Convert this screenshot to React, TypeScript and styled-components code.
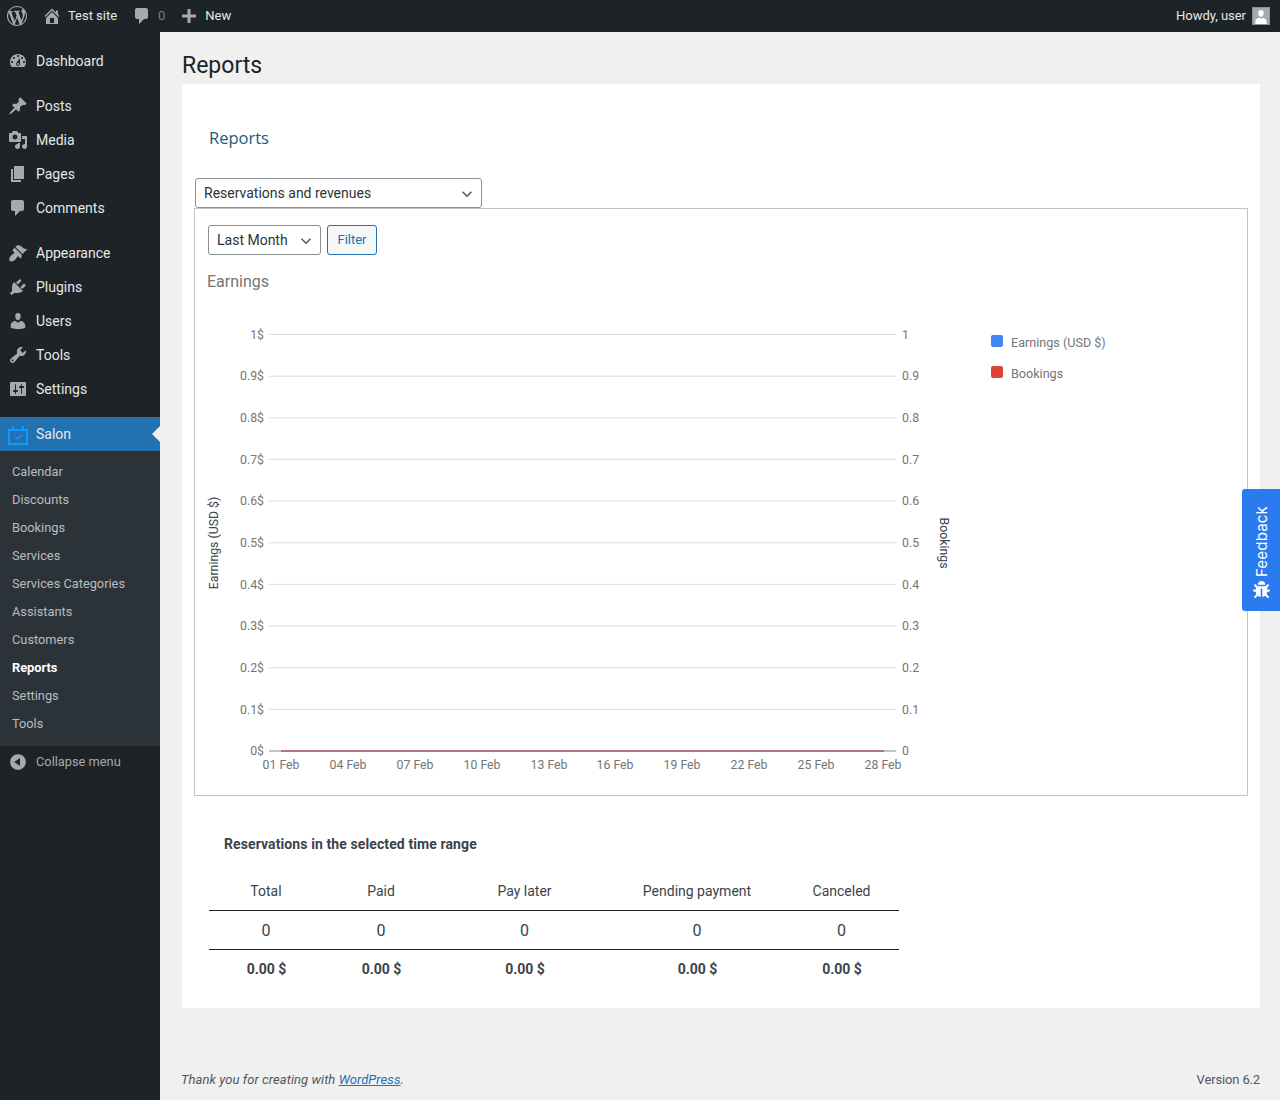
import React from "react";
import styled, { createGlobalStyle } from "styled-components";
import { FaBug } from "react-icons/fa";

const Global = createGlobalStyle`
  html, body { margin: 0; padding: 0; background: #f0f0f1; }
  body { font-family: Roboto, "Liberation Sans", sans-serif; font-size: 14px; font-weight: 400; color: #3c434a; }
  * { box-sizing: border-box; }
`;

const P = {
  wp: "M20 10c0-5.51-4.49-10-10-10C4.48 0 0 4.49 0 10c0 5.52 4.48 10 10 10 5.51 0 10-4.48 10-10zM7.78 15.37L4.37 6.22c.55-.02 1.17-.08 1.17-.08.5-.06.44-1.13-.06-1.11 0 0-1.45.11-2.37.11-.18 0-.37 0-.58-.01C4.12 2.69 6.87 1.11 10 1.11c2.33 0 4.45.87 6.05 2.34-.68-.11-1.65.39-1.65 1.58 0 .74.45 1.36.9 2.1.35.61.55 1.36.55 2.46 0 1.49-1.4 5-1.4 5l-3.03-8.37c.54-.02.82-.17.82-.17.5-.05.44-1.25-.06-1.22 0 0-1.44.12-2.38.12-.87 0-2.33-.12-2.33-.12-.5-.03-.56 1.2-.06 1.22l.92.08 1.26 3.41zM17.41 10c.24-.64.74-1.87.43-4.25.7 1.29 1.05 2.71 1.05 4.25 0 3.29-1.73 6.24-4.4 7.78.97-2.59 1.94-5.2 2.92-7.78zM6.1 18.09C3.12 16.65 1.11 13.53 1.11 10c0-1.3.23-2.48.72-3.59C3.25 10.3 4.67 14.2 6.1 18.09zm4.03-6.63l2.58 6.98c-.86.29-1.76.45-2.71.45-.79 0-1.57-.11-2.29-.33.81-2.38 1.62-4.74 2.42-7.1z",
  home: "M16 8.5l1.53 1.53-1.06 1.06L10 4.62l-6.47 6.47-1.06-1.06L10 2.5l4 4v-2h2v4zm-6-2.46l6 5.99V18H4v-5.97zM12 17v-5H8v5h4z",
  comment: "M5 2h9c1.1 0 2 .9 2 2v7c0 1.1-.9 2-2 2h-2l-5 5v-5H5c-1.1 0-2-.9-2-2V4c0-1.1.9-2 2-2z",
  plus: "M17 8.5v3h-5.5V17h-3v-5.5H3v-3h5.5V3h3v5.5z",
  dashboard: "M3.76 16h12.48c1.1-1.37 1.76-3.11 1.76-5 0-4.42-3.58-8-8-8s-8 3.58-8 8c0 1.89.66 3.63 1.76 5zM10 4c.55 0 1 .45 1 1s-.45 1-1 1-1-.45-1-1 .45-1 1-1zM6 6c.55 0 1 .45 1 1s-.45 1-1 1-1-.45-1-1 .45-1 1-1zm8 0c.55 0 1 .45 1 1s-.45 1-1 1-1-.45-1-1 .45-1 1-1zm-5.37 5.55L12 7v6c0 1.1-.9 2-2 2s-2-.9-2-2c0-.57.24-1.08.63-1.45zM4 10c.55 0 1 .45 1 1s-.45 1-1 1-1-.45-1-1 .45-1 1-1zm12 0c.55 0 1 .45 1 1s-.45 1-1 1-1-.45-1-1 .45-1 1-1zm-5 3c0-.55-.45-1-1-1s-1 .45-1 1 .45 1 1 1 1-.45 1-1z",
  post: "M10.44 3.02l1.82-1.82 6.36 6.35-1.83 1.82c-1.05-.68-2.48-.57-3.41.36l-.75.75c-.92.93-1.04 2.35-.35 3.41l-1.83 1.82-2.41-2.41-2.8 2.79c-.42.42-3.38 2.71-3.8 2.29s1.86-3.39 2.28-3.81l2.79-2.79L4.1 9.36l1.83-1.82c1.05.69 2.48.57 3.4-.36l.75-.75c.93-.92 1.05-2.35.36-3.41z",
  media: "M13 11V4c0-.55-.45-1-1-1h-1.67L9 1H5L3.67 3H2c-.55 0-1 .45-1 1v7c0 .55.45 1 1 1h10c.55 0 1-.45 1-1zM7 4.5c1.38 0 2.5 1.12 2.5 2.5S8.38 9.5 7 9.5 4.5 8.38 4.5 7 5.62 4.5 7 4.5zM14 6h5v10.5c0 1.38-1.12 2.5-2.5 2.5S14 17.88 14 16.5s1.12-2.5 2.5-2.5c.17 0 .34.02.5.05V9h-3V6zm-4 8.05V13h2v3.5c0 1.38-1.12 2.5-2.5 2.5S7 17.88 7 16.5 8.12 14 9.5 14c.17 0 .34.02.5.05z",
  page: "M6 15V2h10v13H6zm-1 1h8v2H3V5h2v11z",
  appearance: "M14.48 11.06L7.41 3.99l1.5-1.5c.5-.56 2.3-.47 3.51.32 1.21.8 1.43 1.28 2.91 2.1 1.18.64 2.45 1.26 4.45.85zm-.71.71L6.7 4.7 4.93 6.47c-.39.39-.39 1.02 0 1.41l1.06 1.06c.39.39.39 1.03 0 1.42-.6.6-1.43 1.11-2.21 1.69-.35.26-.7.53-1.01.84-1.34 1.34-1.86 3.44-1.07 5.22 1.78.79 3.88.27 5.22-1.07.31-.31.58-.66.84-1.01.58-.78 1.09-1.61 1.69-2.21.39-.39 1.03-.39 1.42 0l1.06 1.06c.39.39 1.02.39 1.41 0z",
  plugins: "M13.11 4.36L9.87 7.6 8 5.73l3.24-3.24c.35-.34 1.05-.2 1.56.32.52.51.66 1.21.31 1.55zm-8 1.77l.91-1.12 9.01 9.01-1.19.84c-.71.71-2.63 1.16-3.82 1.16H6.14L4.9 17.26c-.59.59-1.54.59-2.12 0-.59-.58-.59-1.53 0-2.12l1.24-1.24v-3.88c0-1.13.4-3.19 1.09-3.89zm7.26 3.97l3.24-3.24c.34-.35 1.04-.21 1.55.31.52.51.66 1.21.31 1.55l-3.24 3.25z",
  users: "M10 9.25c-2.27 0-2.73-3.44-2.73-3.44C7 4.02 7.82 2 9.97 2c2.16 0 2.98 2.02 2.71 3.81 0 0-.41 3.44-2.68 3.44zm0 2.57L12.72 10c2.39 0 4.52 2.33 4.52 4.53v2.49s-3.65 1.13-7.24 1.13c-3.65 0-7.24-1.13-7.24-1.13v-2.49c0-2.25 1.94-4.48 4.47-4.48z",
  tools: "M16.68 9.77c-1.34 1.34-3.3 1.67-4.95.99l-5.41 6.52c-.99.99-2.59.99-3.58 0s-.99-2.59 0-3.57l6.52-5.42c-.68-1.65-.35-3.61.99-4.95 1.28-1.28 3.12-1.62 4.72-1.06l-2.89 2.89 2.82 2.82 2.86-2.87c.53 1.58.18 3.39-1.08 4.65zM3.81 16.21c.4.39 1.04.39 1.43 0 .4-.4.4-1.04 0-1.43-.39-.4-1.03-.4-1.43 0-.39.39-.39 1.03 0 1.43z",
  settings: "M18 16V4c0-.55-.45-1-1-1H3c-.55 0-1 .45-1 1v12c0 .55.45 1 1 1h14c.55 0 1-.45 1-1zM8 11h1c.55 0 1 .45 1 1s-.45 1-1 1H8v1.5c0 .28-.22.5-.5.5s-.5-.22-.5-.5V13H6c-.55 0-1-.45-1-1s.45-1 1-1h1V5.5c0-.28.22-.5.5-.5s.5.22.5.5V11zm5-2h-1c-.55 0-1-.45-1-1s.45-1 1-1h1V5.5c0-.28.22-.5.5-.5s.5.22.5.5V7h1c.55 0 1 .45 1 1s-.45 1-1 1h-1v5.5c0 .28-.22.5-.5.5s-.5-.22-.5-.5V9z",
  collapse: "M10 2.16c4.33 0 7.84 3.51 7.84 7.84s-3.51 7.84-7.84 7.84S2.16 14.33 2.16 10 5.71 2.16 10 2.16zm2 11.72V6.12L6.18 9.97z",
  avatar: "M10 11c-2.3 0-3.4-2.6-3.4-5C6.6 3.9 8 2.6 10 2.6s3.4 1.3 3.4 3.4c0 2.4-1.1 5-3.4 5zM3 20v-3.6c0-1.8 2.6-3.6 4.8-4.2L10 13.6l2.2-1.4c2.2.6 4.8 2.4 4.8 4.2V20z",
};

const chevron = `url("data:image/svg+xml,%3Csvg xmlns='http://www.w3.org/2000/svg' viewBox='0 0 20 20'%3E%3Cpath d='M5 7.5l5 5 5-5' fill='none' stroke='%2350575e' stroke-width='1.6'/%3E%3C/svg%3E")`;

const Shell = styled.div`
  display: flex;
  flex-direction: column;
  width: 1280px;
  height: 1100px;
  overflow: hidden;
  position: relative;
`;
const TopBar = styled.header`
  flex: 0 0 32px;
  display: flex;
  align-items: center;
  justify-content: space-between;
  background: #1d2327;
  color: #e6e7e8;
  font-size: 13px;
  padding: 0 10px 0 7px;
`;
const BarGroup = styled.div`
  display: flex;
  align-items: center;
`;
const BarItem = styled.div<{ $gap?: number; $ml?: number }>`
  display: flex;
  align-items: center;
  gap: ${(p) => p.$gap ?? 5}px;
  margin-left: ${(p) => p.$ml ?? 0}px;
`;
const BarText = styled.span`
  line-height: 15px;
  padding-bottom: 1px;
  letter-spacing: -0.02px;
`;
const Icon = styled.svg<{ $size?: number; $color?: string }>`
  width: ${(p) => p.$size ?? 20}px;
  height: ${(p) => p.$size ?? 20}px;
  flex: none;
  fill: ${(p) => p.$color ?? "#a7aaad"};
  display: block;
  overflow: visible;
`;
const Muted = styled(BarText)`
  color: #787c82;
`;
const Avatar = styled.span`
  display: block;
  width: 18px;
  height: 18px;
  background: #a7aaad;
  border: 1px solid #8c8f94;
  margin-left: 6px;
  overflow: hidden;
`;
const Body = styled.div`
  flex: 1;
  display: flex;
  min-height: 0;
`;
const Side = styled.nav`
  flex: 0 0 160px;
  background: #1d2327;
  padding-top: 12px;
`;
const MenuItem = styled.div<{ $top?: number; $active?: boolean }>`
  position: relative;
  height: 34px;
  margin-top: ${(p) => p.$top ?? 0}px;
  display: flex;
  align-items: center;
  gap: 8px;
  padding-left: 8px;
  color: #e6e7e8;
  font-size: 14px;
  background: ${(p) => (p.$active ? "#2271b1" : "transparent")};
`;
const Notch = styled.span`
  position: absolute;
  right: 0;
  top: 9px;
  border: 8px solid transparent;
  border-left-width: 0;
  border-right-color: #f0f0f1;
`;
const SubMenu = styled.div`
  background: #2c3338;
  padding: 7px 0 8px;
`;
const SubItem = styled.div<{ $current?: boolean }>`
  height: 28px;
  line-height: 28px;
  padding-left: 12px;
  font-size: 12.8px;
  color: ${(p) => (p.$current ? "#fff" : "#b9bcc0")};
  font-weight: ${(p) => (p.$current ? 700 : 400)};
`;
const Collapse = styled.div`
  height: 31px;
  display: flex;
  align-items: center;
  gap: 8px;
  padding-left: 8px;
  font-size: 12.8px;
  color: #a7aaad;
`;
const Main = styled.main`
  flex: 1;
  display: flex;
  flex-direction: column;
  padding: 0 20px 0 22px;
  min-width: 0;
`;
const PageTitle = styled.h1`
  margin: 0;
  height: 52px;
  padding-top: 18px;
  font-size: 23px;
  line-height: 32px;
  font-weight: 400;
  color: #1d2327;
`;
const Panel = styled.section`
  background: #fff;
  height: 924px;
  padding: 42px 12px 0 13px;
`;
const PanelTitle = styled.h2`
  margin: 0 0 28px 14px;
  font-family: "Open Sans", sans-serif;
  font-size: 16.5px;
  line-height: 24px;
  font-weight: 400;
  color: #135e7c;
`;
const Select = styled.select<{ $w: number }>`
  display: block;
  appearance: none;
  width: ${(p) => p.$w}px;
  height: 30px;
  padding: 0 24px 0 8px;
  font-family: Roboto, sans-serif;
  font-size: 14px;
  font-weight: 400;
  color: #2c3338;
  background: #fff ${chevron} no-repeat right 5px top 55% / 18px 18px;
  border: 1px solid #8c8f94;
  border-radius: 3px;
`;
const Box = styled.div`
  width: 1054px;
  height: 588px;
  border: 1px solid #c3c4c7;
  margin-left: -1px;
  padding: 16px 13px 0 13px;
`;
const FilterRow = styled.div`
  display: flex;
  gap: 6px;
`;
const FilterBtn = styled.button`
  width: 50px;
  height: 30px;
  padding: 0 0 1px;
  font-family: Roboto, sans-serif;
  font-size: 13px;
  font-weight: 400;
  color: #2271b1;
  background: #f6f7f7;
  border: 1px solid #2271b1;
  border-radius: 3px;
`;
const ChartTitle = styled.h3`
  margin: 16px 0 0 -1px;
  font-size: 16px;
  line-height: 22px;
  font-weight: 400;
  color: #757575;
`;
const ChartSvg = styled.svg`
  display: block;
  margin: 10px 0 0 -13px;
  width: 1052px;
  height: 483px;
`;
const ResTitle = styled.h4`
  margin: 39px 0 0 29px;
  font-size: 14px;
  line-height: 18px;
  font-weight: 700;
  letter-spacing: 0.1px;
  color: #3c434a;
`;
const Table = styled.table`
  margin: 18px 0 0 14px;
  width: 690px;
  border-collapse: collapse;
  table-layout: fixed;
`;
const Col = styled.col<{ $w: number }>`
  width: ${(p) => p.$w}px;
`;
const HeadCell = styled.th`
  height: 39px;
  font-size: 14px;
  font-weight: 400;
  text-align: center;
  color: #3c434a;
  border-bottom: 1px solid #1d2327;
  padding: 2px 0 0;
`;
const CountCell = styled.td`
  height: 39px;
  font-size: 16px;
  text-align: center;
  color: #3c434a;
  border-bottom: 1px solid #1d2327;
  padding: 2px 0 0;
`;
const TotalCell = styled.td`
  height: 38px;
  font-size: 14px;
  font-weight: 700;
  text-align: center;
  color: #3c434a;
  padding: 2px 0 0 1px;
`;
const Footer = styled.footer`
  display: flex;
  justify-content: space-between;
  font-size: 13px;
  line-height: 18px;
  padding: 63px 0 0 0;
  margin-left: -1px;
  color: #50575e;
`;
const Thanks = styled.em`
  letter-spacing: 0.07px;
  a { color: #2271b1; text-decoration: underline; }
`;
const Version = styled.span`
  letter-spacing: -0.15px;
`;
const Feedback = styled.aside`
  position: absolute;
  right: 0;
  top: 489px;
  width: 38px;
  height: 122px;
  background: #2b7bf0;
  border-radius: 3px 0 0 3px;
  color: #fff;
  display: flex;
  flex-direction: column-reverse;
  align-items: center;
  justify-content: flex-start;
  gap: 5px;
  padding: 12px 0 13px;
`;
const FeedbackText = styled.span`
  writing-mode: vertical-rl;
  transform: rotate(180deg) translateX(-1px);
  font-family: Inter, sans-serif;
  font-size: 15px;
  font-weight: 400;
  letter-spacing: 0.2px;
  line-height: 18px;
  margin-bottom: -1px;
`;

const Ic = ({ d, size, color }: { d: string; size?: number; color?: string }) => (
  <Icon viewBox="0 0 20 20" $size={size} $color={color}><path d={d} /></Icon>
);

const menu1 = [
  { t: "Dashboard", d: P.dashboard, top: 0 },
  { t: "Posts", d: P.post, top: 11 },
  { t: "Media", d: P.media },
  { t: "Pages", d: P.page },
  { t: "Comments", d: P.comment },
  { t: "Appearance", d: P.appearance, top: 11 },
  { t: "Plugins", d: P.plugins },
  { t: "Users", d: P.users },
  { t: "Tools", d: P.tools },
  { t: "Settings", d: P.settings },
];
const subs = ["Calendar", "Discounts", "Bookings", "Services", "Services Categories", "Assistants", "Customers", "Reports", "Settings", "Tools"];

const yVals = ["1", "0.9", "0.8", "0.7", "0.6", "0.5", "0.4", "0.3", "0.2", "0.1", "0"];
const xVals = [[281, "01 Feb"], [348, "04 Feb"], [415, "07 Feb"], [482, "10 Feb"], [549, "13 Feb"], [615, "16 Feb"], [682, "19 Feb"], [749, "22 Feb"], [816, "25 Feb"], [883, "28 Feb"]] as const;
const tableCols = [114, 116, 171, 174, 115];
const heads = ["Total", "Paid", "Pay later", "Pending payment", "Canceled"];

const Chart = () => (
  <ChartSvg viewBox="195 303 1052 483" fontFamily="Roboto, sans-serif" fontSize="12.3">
    {yVals.map((v, i) => {
      const y = 334.5 + i * 41.65;
      return (
        <g key={v}>
          <line x1="269" x2="896" y1={y} y2={y} stroke={i === 10 ? "#8a8a8a" : "#dcdcdc"} strokeWidth="1" />
          <text x="264" y={y + 4.3} textAnchor="end" fill="#757575">{v}$</text>
          <text x="902" y={y + 4.3} fill="#757575">{v}</text>
        </g>
      );
    })}
    <line x1="281" x2="884" y1="751" y2="751" stroke="#a85a78" strokeWidth="1.4" />
    {xVals.map(([x, t]) => (
      <text key={t} x={x} y="769" textAnchor="middle" fill="#757575">{t}</text>
    ))}
    <text transform="translate(218 543) rotate(-90)" textAnchor="middle" fill="#3c434a">Earnings (USD $)</text>
    <text transform="translate(940 543) rotate(90)" textAnchor="middle" fill="#3c434a">Bookings</text>
    <rect x="991" y="335" width="12" height="12" rx="2" fill="#4285f4" />
    <text x="1011" y="347" fill="#757575" fontSize="12.6">Earnings (USD $)</text>
    <rect x="991" y="366" width="12" height="12" rx="2" fill="#db4437" />
    <text x="1011" y="378" fill="#757575" fontSize="12.6">Bookings</text>
  </ChartSvg>
);

export default function App() {
  return (
    <Shell>
      <Global />
      <TopBar>
        <BarGroup>
          <Ic d={P.wp} />
          <BarItem $ml={15} $gap={6}><Ic d={P.home} /><BarText>Test site</BarText></BarItem>
          <BarItem $ml={15} $gap={6}><Ic d={P.comment} /><Muted>0</Muted></BarItem>
          <BarItem $ml={14} $gap={6}><Ic d={P.plus} /><BarText>New</BarText></BarItem>
        </BarGroup>
        <BarGroup>
          <BarText>Howdy, user</BarText>
          <Avatar><Ic d={P.avatar} size={16} color="#fff" /></Avatar>
        </BarGroup>
      </TopBar>
      <Body>
        <Side>
          {menu1.map((m) => (
            <MenuItem key={m.t} $top={m.top}><Ic d={m.d} />{m.t}</MenuItem>
          ))}
          <MenuItem $top={11} $active>
            <Icon viewBox="0 0 20 20" $color="none">
              <path d="M1 6h18v14H1zM5 2v4M15 2v4" stroke="#0a9bff" strokeWidth="2" />
              <path d="M7 12.5l2.5 2.5 4-4" stroke="#0a9bff" strokeWidth="1.5" />
            </Icon>
            Salon
            <Notch />
          </MenuItem>
          <SubMenu>
            {subs.map((s, i) => (
              <SubItem key={i} $current={s === "Reports"}>{s}</SubItem>
            ))}
          </SubMenu>
          <Collapse><Ic d={P.collapse} />Collapse menu</Collapse>
        </Side>
        <Main>
          <PageTitle>Reports</PageTitle>
          <Panel>
            <PanelTitle>Reports</PanelTitle>
            <Select $w={287} defaultValue="a"><option value="a">Reservations and revenues</option></Select>
            <Box>
              <FilterRow>
                <Select $w={113} defaultValue="a"><option value="a">Last Month</option></Select>
                <FilterBtn>Filter</FilterBtn>
              </FilterRow>
              <ChartTitle>Earnings</ChartTitle>
              <Chart />
            </Box>
            <ResTitle>Reservations in the selected time range</ResTitle>
            <Table>
              <colgroup>{tableCols.map((w, i) => <Col key={i} $w={w} />)}</colgroup>
              <thead><tr>{heads.map((h) => <HeadCell key={h}>{h}</HeadCell>)}</tr></thead>
              <tbody>
                <tr>{heads.map((h) => <CountCell key={h}>0</CountCell>)}</tr>
                <tr>{heads.map((h) => <TotalCell key={h}>0.00 $</TotalCell>)}</tr>
              </tbody>
            </Table>
          </Panel>
          <Footer>
            <Thanks>Thank you for creating with <a href="#">WordPress</a>.</Thanks>
            <Version>Version 6.2</Version>
          </Footer>
        </Main>
      </Body>
      <Feedback>
        <FaBug size={17} />
        <FeedbackText>Feedback</FeedbackText>
      </Feedback>
    </Shell>
  );
}
